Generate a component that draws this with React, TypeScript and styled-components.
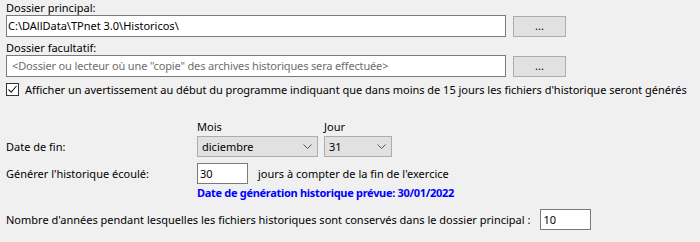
import React from "react";
import styled, { createGlobalStyle } from "styled-components";

const Global = createGlobalStyle`
  html, body { margin: 0; padding: 0; background: #f0f0f0; }
  body { font-family: "Noto Sans", "Open Sans", sans-serif; font-size: 11px; color: #000; }
`;

const Page = styled.div`
  width: 700px;
  height: 242px;
  box-sizing: border-box;
  padding: 0 0 0 6px;
  display: flex;
  flex-direction: column;
  background: #f0f0f0;
  overflow: hidden;
`;

const Label = styled.div<{ $top?: number }>`
  margin-top: ${(p) => p.$top ?? 0}px;
  height: 15px;
  line-height: 15px;
  white-space: nowrap;
`;

const PathRow = styled.div`
  display: flex;
  align-items: center;
  gap: 7px;
  height: 22px;
`;

const TextBox = styled.div<{ $w: number; $placeholder?: boolean }>`
  box-sizing: border-box;
  width: ${(p) => p.$w}px;
  height: 22px;
  border: 1px solid #7a7a7a;
  background: #fff;
  padding: 0 ${(p) => (p.$placeholder ? 5 : 1)}px;
  line-height: 20px;
  white-space: nowrap;
  overflow: hidden;
  letter-spacing: ${(p) => (p.$placeholder ? "-0.15px" : "0")};
  color: ${(p) => (p.$placeholder ? "#6d6d6d" : "#000")};
`;

const Browse = styled.div`
  box-sizing: border-box;
  width: 53px;
  height: 21px;
  border: 1px solid #adadad;
  background: #e1e1e1;
  display: flex;
  align-items: center;
  justify-content: center;
  padding-bottom: 2px;
`;

const CheckRow = styled.div`
  display: flex;
  align-items: center;
  gap: 6px;
  margin-top: 5px;
  height: 14px;
  white-space: nowrap;
  letter-spacing: -0.02px;
`;

const Box = styled.div`
  box-sizing: border-box;
  width: 13px;
  height: 13px;
  border: 1px solid #333;
  background: #fff;
  display: flex;
  align-items: center;
  justify-content: center;
`;

const Lower = styled.div`
  display: grid;
  grid-template-columns: 191px auto;
  margin-top: 23px;
  align-items: center;
`;

const Cell = styled.div`
  white-space: nowrap;
`;

const EndCell = styled(Cell)`
  align-self: end;
  padding-bottom: 3px;
`;

const GapCell = styled(Cell)`
  margin-top: 6px;
`;

const SelectGroup = styled.div`
  display: flex;
  gap: 6px;
`;

const SelectCol = styled.div`
  display: flex;
  flex-direction: column;
  gap: 2px;
`;

const Select = styled.div<{ $w: number }>`
  box-sizing: border-box;
  width: ${(p) => p.$w}px;
  height: 21px;
  border: 1px solid #adadad;
  background: #e1e1e1;
  display: flex;
  align-items: center;
  justify-content: space-between;
  padding: 0 5px 0 4px;
`;

const DaysRow = styled.div`
  display: flex;
  align-items: center;
  gap: 10px;
  margin-top: 6px;
`;

const NumBox = styled.div<{ $w: number }>`
  box-sizing: border-box;
  width: ${(p) => p.$w}px;
  height: 21px;
  border: 1px solid #7a7a7a;
  background: #fff;
  padding: 0 2px;
  line-height: 19px;
`;

const Blue = styled.div`
  color: #0000ff;
  font-weight: bold;
  margin-top: 1px;
  height: 15px;
  line-height: 15px;
  letter-spacing: -0.3px;
  white-space: nowrap;
`;

const KeepRow = styled.div`
  display: flex;
  align-items: center;
  gap: 10px;
  margin-top: 9px;
  white-space: nowrap;
`;

const Chevron = () => (
  <svg width="9" height="5" viewBox="0 0 9 5">
    <path d="M0.5 0.5 L4.5 4.5 L8.5 0.5" fill="none" stroke="#555" strokeWidth="1" />
  </svg>
);

export default function App() {
  return (
    <>
      <Global />
      <Page>
        <Label $top={0}>Dossier principal:</Label>
        <PathRow>
          <TextBox $w={500}>C:\DAllData\TPnet 3.0\Historicos\</TextBox>
          <Browse>...</Browse>
        </PathRow>
        <Label $top={3}>Dossier facultatif:</Label>
        <PathRow>
          <TextBox $w={500} $placeholder>
            &lt;Dossier ou lecteur où une "copie" des archives historiques sera effectuée&gt;
          </TextBox>
          <Browse>...</Browse>
        </PathRow>
        <CheckRow>
          <Box>
            <svg width="11" height="11" viewBox="0 0 11 11">
              <path d="M1.5 5.5 L4.2 8.2 L9.5 2" fill="none" stroke="#222" strokeWidth="1.1" />
            </svg>
          </Box>
          Afficher un avertissement au début du programme indiquant que dans moins de 15 jours les fichiers d'historique seront générés
        </CheckRow>
        <Lower>
          <EndCell>Date de fin:</EndCell>
          <SelectGroup>
            <SelectCol>
              <Cell>Mois</Cell>
              <Select $w={121}>
                diciembre
                <Chevron />
              </Select>
            </SelectCol>
            <SelectCol>
              <Cell>Jour</Cell>
              <Select $w={68}>
                31
                <Chevron />
              </Select>
            </SelectCol>
          </SelectGroup>
          <GapCell>Générer l'historique écoulé:</GapCell>
          <DaysRow>
            <NumBox $w={51}>30</NumBox>
            <Cell>jours à compter de la fin de l'exercice</Cell>
          </DaysRow>
          <div />
          <Blue>Date de génération historique prévue: 30/01/2022</Blue>
        </Lower>
        <KeepRow>
          Nombre d'années pendant lesquelles les fichiers historiques sont conservés dans le dossier principal :
          <NumBox $w={51}>10</NumBox>
        </KeepRow>
      </Page>
    </>
  );
}
